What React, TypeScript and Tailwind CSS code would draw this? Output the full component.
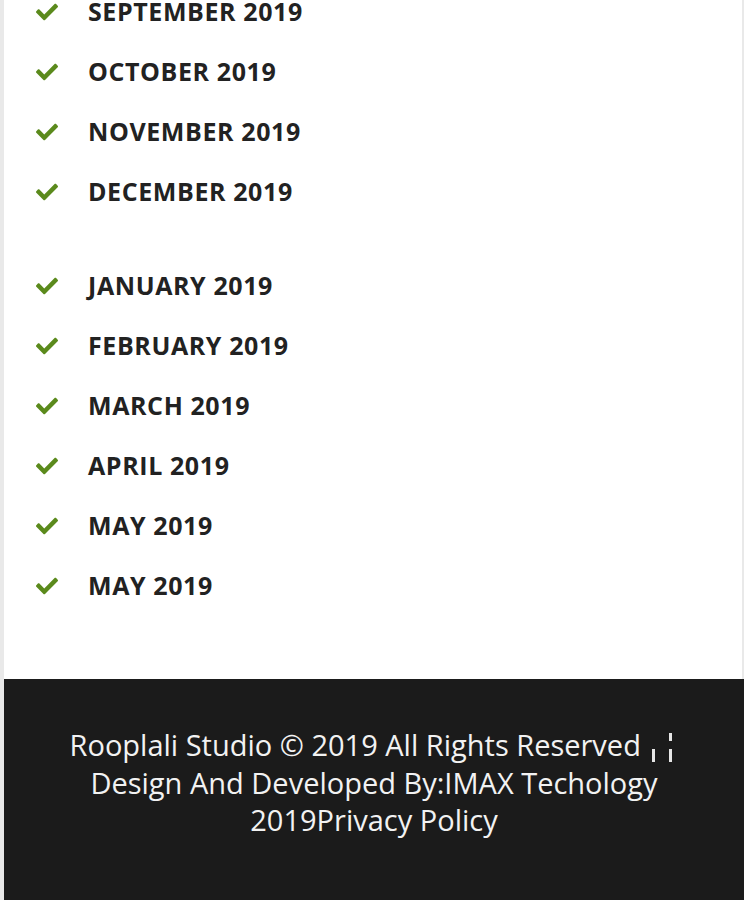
import React from "react";

const group1 = ["SEPTEMBER 2019", "OCTOBER 2019", "NOVEMBER 2019", "DECEMBER 2019"];
const group2 = ["JANUARY 2019", "FEBRUARY 2019", "MARCH 2019", "APRIL 2019", "MAY 2019", "MAY 2019"];

function Check() {
  return (
    <svg viewBox="0 0 512 512" className="w-[22px] h-[22px] shrink-0" fill="#5b8a1c">
      <path d="M173.9 439.4l-166.4-166.4c-10-10-10-26.2 0-36.2l36.2-36.2c10-10 26.2-10 36.2 0L192 312.7 432.1 72.6c10-10 26.2-10 36.2 0l36.2 36.2c10 10 10 26.2 0 36.2l-294.4 294.4c-10 10-26.2 10-36.2 0z" />
    </svg>
  );
}

function Row({ label }: { label: string }) {
  return (
    <li className="flex items-center h-[60px]">
      <span className="pl-[32px] flex items-center">
        <Check />
      </span>
      <span className="pl-[30px] text-[25px] font-bold text-[#222222] tracking-[0.6px]">{label}</span>
    </li>
  );
}

export default function App() {
  return (
    <div className="w-[744px] h-[900px] overflow-hidden bg-[#e9e9e9] pl-[4px] pr-[2px]" style={{ fontFamily: '"Open Sans", sans-serif' }}>
      <div className="bg-white h-[697px] -mt-[18px]">
        <ul className="flex flex-col">
          {group1.map((l, i) => (
            <Row key={"a" + i} label={l} />
          ))}
        </ul>
        <ul className="flex flex-col mt-[34px]">
          {group2.map((l, i) => (
            <Row key={"b" + i} label={l} />
          ))}
        </ul>
      </div>
      <footer className="bg-[#1b1b1b] h-[240px] -mr-[2px] pt-[47px] text-center text-[#f2f2f2] text-[29px] leading-[37.5px]">
        <p className="px-[30px]">
          Rooplali Studio © 2019 All Rights Reserved{" "}
          <span className="inline-flex items-end gap-[14px] h-[30px] align-[-6px] ml-[4px] mr-[6px]">
            <span className="inline-block w-[3px] h-[13px] bg-[#e6e6e6]" />
            <span className="inline-flex flex-col gap-[8px]">
              <span className="inline-block w-[3px] h-[8px] bg-[#e6e6e6]" />
              <span className="inline-block w-[3px] h-[13px] bg-[#e6e6e6]" />
            </span>
          </span>
          <br />
          Design And Developed By:IMAX Techology
          <br />
          2019Privacy Policy
        </p>
      </footer>
    </div>
  );
}
